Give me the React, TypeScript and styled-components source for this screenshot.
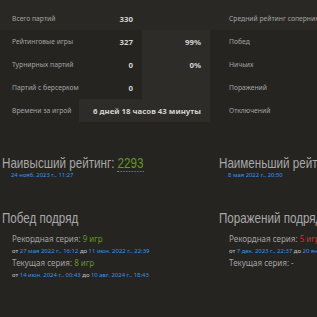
import React from "react";
import styled, { createGlobalStyle } from "styled-components";

const GlobalStyle = createGlobalStyle`
  html, body {
    margin: 0;
    background: #262421;
    overflow: hidden;
  }
  body {
    font-family: "Noto Sans", "Liberation Sans", sans-serif;
    color: #a3a3a3;
  }
`;

const Page = styled.main`
  width: 440px;
`;

const Columns = styled.section<{ $top?: number }>`
  display: grid;
  grid-template-columns: 208px 208px;
  column-gap: 9px;
  padding-left: 2px;
  margin-top: ${(p) => p.$top ?? 0}px;
`;

const Counters = styled(Columns)`
  padding-top: 7px;
  background: linear-gradient(#2a2825 30px, transparent 30px);
`;

const Table = styled.table`
  width: 208px;
  border-collapse: collapse;
  table-layout: fixed;
`;

const Label = styled.th`
  height: 23px;
  padding: 0 0 0 10px;
  text-align: left;
  font-weight: 400;
  font-size: 6.75px;
  color: #a3a3a3;
  white-space: nowrap;
  overflow: visible;
`;

const Value = styled.td<{ $shade?: boolean }>`
  height: 23px;
  padding: 0 9px 0 0;
  text-align: right;
  font-weight: 700;
  font-size: 7.85px;
  color: #d2d2d2;
  white-space: nowrap;
  background: ${(p) => (p.$shade ? "#2e2c29" : "transparent")};
`;

const Block = styled.div`
  white-space: nowrap;
`;

/* the headings are drawn in a condensed cut */
const Heading = styled.h2`
  margin: 0;
  font-family: "Liberation Sans", "Noto Sans", sans-serif;
  font-weight: 400;
  font-size: 15px;
  line-height: 17px;
  color: #a8a8a8;
  transform: scaleX(0.775);
  transform-origin: left center;
`;

const Rating = styled.span`
  color: #629924;
  border-bottom: 1px dotted #6f8299;
`;

const DateLink = styled.a`
  color: #3893e8;
  text-decoration: none;
`;

const DateLine = styled.div`
  padding-left: 9px;
  font-size: 5.9px;
  line-height: 8px;
  color: #c8c8c8;
`;

const Streak = styled.div`
  padding-left: 10px;
  & + & {
    margin-top: 1.5px;
  }
  &:first-of-type {
    margin-top: 7px;
  }
`;

const StreakTitle = styled.div`
  font-size: 8px;
  line-height: 11px;
  color: #a3a3a3;
`;

const Count = styled.span<{ $bad?: boolean }>`
  color: ${(p) => (p.$bad ? "#cc3333" : "#629924")};
`;

const StreakDates = styled.div`
  margin-top: 3.5px;
  font-size: 5.95px;
  line-height: 8px;
  color: #c8c8c8;
`;

const Range = ({ from, to }: { from: string; to: string }) => (
  <StreakDates>
    от <DateLink href="#">{from}</DateLink> до <DateLink href="#">{to}</DateLink>
  </StreakDates>
);

export default function App() {
  return (
    <Page>
      <GlobalStyle />
      <Counters>
        <Table>
          <colgroup>
            <col style={{ width: 77 }} />
            <col style={{ width: 63 }} />
            <col style={{ width: 68 }} />
          </colgroup>
          <tbody>
            <tr>
              <Label>Всего партий</Label>
              <Value>330</Value>
              <Value />
            </tr>
            <tr>
              <Label>Рейтинговые игры</Label>
              <Value>327</Value>
              <Value $shade>99%</Value>
            </tr>
            <tr>
              <Label>Турнирных партий</Label>
              <Value>0</Value>
              <Value $shade>0%</Value>
            </tr>
            <tr>
              <Label>Партий с берсерком</Label>
              <Value>0</Value>
              <Value $shade />
            </tr>
            <tr>
              <Label>Времени за игрой</Label>
              <Value $shade colSpan={2}>
                6 дней 18 часов 43 минуты
              </Value>
            </tr>
          </tbody>
        </Table>
        <Table>
          <tbody>
            <tr>
              <Label>Средний рейтинг соперников</Label>
            </tr>
            <tr>
              <Label>Побед</Label>
            </tr>
            <tr>
              <Label>Ничьих</Label>
            </tr>
            <tr>
              <Label>Поражений</Label>
            </tr>
            <tr>
              <Label>Отключений</Label>
            </tr>
          </tbody>
        </Table>
      </Counters>

      <Columns $top={31.5}>
        <Block>
          <Heading>
            Наивысший рейтинг: <Rating>2293</Rating>
          </Heading>
          <DateLine>
            <DateLink href="#">24 нояб. 2023 г., 11:27</DateLink>
          </DateLine>
        </Block>
        <Block>
          <Heading>
            Наименьший рейтинг: <Rating>1500</Rating>
          </Heading>
          <DateLine>
            <DateLink href="#">8 мая 2022 г., 20:50</DateLink>
          </DateLine>
        </Block>
      </Columns>

      <Columns $top={30}>
        <Block>
          <Heading>Побед подряд</Heading>
          <Streak>
            <StreakTitle>
              Рекордная серия: <Count>9 игр</Count>
            </StreakTitle>
            <Range from="27 мая 2022 г., 16:12" to="11 июн. 2022 г., 22:39" />
          </Streak>
          <Streak>
            <StreakTitle>
              Текущая серия: <Count>8 игр</Count>
            </StreakTitle>
            <Range from="14 июн. 2024 г., 00:43" to="10 авг. 2024 г., 18:43" />
          </Streak>
        </Block>
        <Block>
          <Heading>Поражений подряд</Heading>
          <Streak>
            <StreakTitle>
              Рекордная серия: <Count $bad>5 игр</Count>
            </StreakTitle>
            <Range from="7 дек. 2023 г., 22:37" to="20 янв. 2024 г., 14:05" />
          </Streak>
          <Streak>
            <StreakTitle>Текущая серия: -</StreakTitle>
          </Streak>
        </Block>
      </Columns>
    </Page>
  );
}
